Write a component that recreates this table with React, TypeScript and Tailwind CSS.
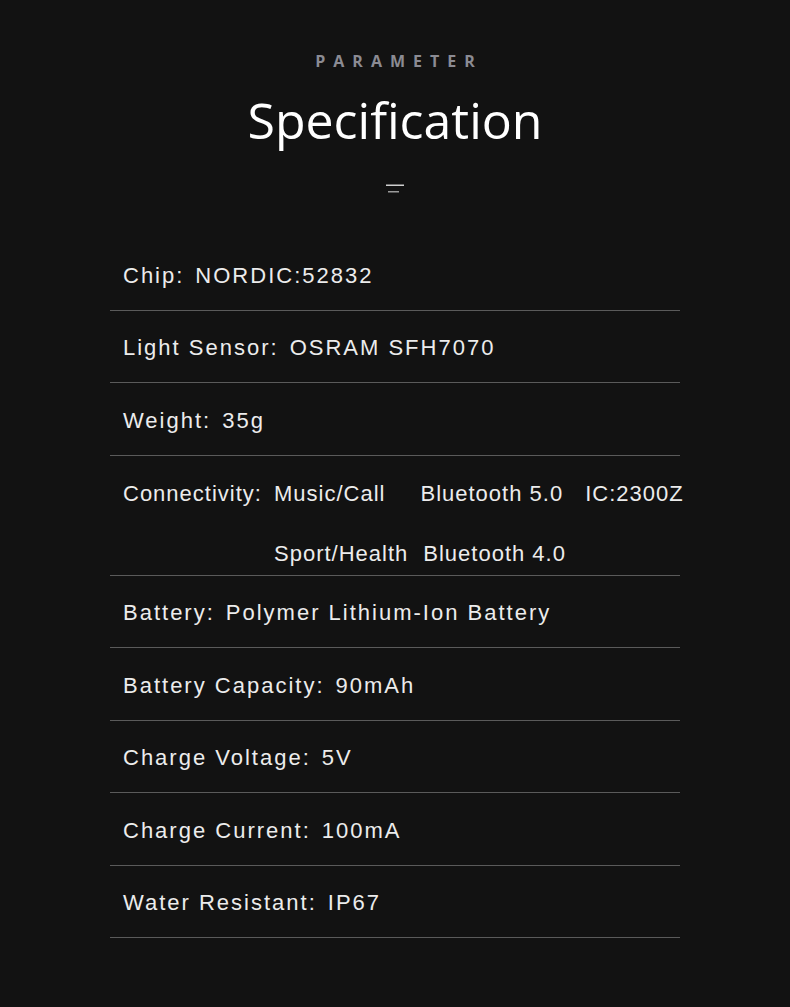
const specs: { label: string; value: string }[] = [
  { label: 'Chip:', value: 'NORDIC:52832' },
  { label: 'Light Sensor:', value: 'OSRAM SFH7070' },
  { label: 'Weight:', value: '35g' },
  { label: 'Connectivity:', value: '' },
  { label: 'Battery:', value: 'Polymer Lithium-Ion Battery' },
  { label: 'Battery Capacity:', value: '90mAh' },
  { label: 'Charge Voltage:', value: '5V' },
  { label: 'Charge Current:', value: '100mA' },
  { label: 'Water Resistant:', value: 'IP67' },
];

export default function App() {
  return (
    <div className="min-h-[1007px] w-[790px] bg-[#121212] pt-[52px] font-['Liberation_Sans',Arial,sans-serif]">
      {/* Header */}
      <div className="flex flex-col items-center">
        <p className="pl-[8px] font-['Open_Sans',sans-serif] text-[16px] leading-[18px] font-bold tracking-[8px] text-[#8b8b93]">
          PARAMETER
        </p>
        <h1 className="mt-[20px] font-['Open_Sans',sans-serif] text-[50px] leading-[60px] text-white">
          Specification
        </h1>
        <svg className="mt-[34px]" width="18" height="9" viewBox="0 0 18 9">
          <rect x="0" y="0.5" width="18" height="1.5" fill="#cfcfcf" />
          <rect x="2" y="7" width="11" height="1.5" fill="#9a9a9a" />
        </svg>
      </div>

      {/* Spec rows */}
      <div className="mx-auto mt-[45px] w-[570px]">
        {specs.map((s) =>
          s.label === 'Connectivity:' ? (
            <div key={s.label} className="border-b border-[#5a5a5a] pt-[20px] pb-[3px] pl-[13px] text-[22px] leading-[36px] tracking-[1px] whitespace-nowrap text-[#ececec]">
              <div className="flex">
                <span className="w-[151px] shrink-0">{s.label}</span>
                <span>Music/Call</span>
                <span className="ml-[35px]">Bluetooth 5.0</span>
                <span className="ml-[22px]">IC:2300Z</span>
              </div>
              <div className="mt-[24px] flex">
                <span className="w-[151px] shrink-0" />
                <span>Sport/Health</span>
                <span className="ml-[15px]">Bluetooth 4.0</span>
              </div>
            </div>
          ) : (
            <div key={s.label} className="flex gap-[11px] border-b border-[#5a5a5a] pt-[19.5px] pb-[16px] pl-[13px] text-[22px] leading-[36px] tracking-[2px] whitespace-nowrap text-[#ececec]">
              <span>{s.label}</span>
              <span>{s.value}</span>
            </div>
          )
        )}
      </div>
    </div>
  );
}
